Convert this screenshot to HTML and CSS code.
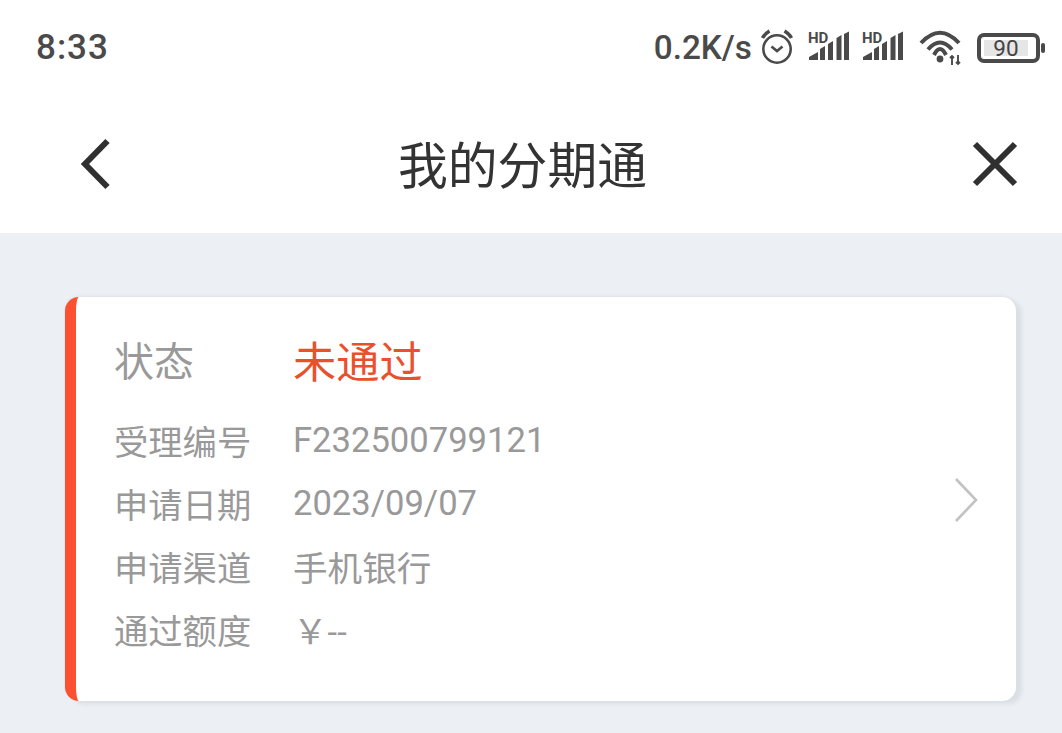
FILE: index.html
```html
<!DOCTYPE html>
<html lang="zh-CN">
<head>
<meta charset="utf-8">
<title>我的分期通</title>
<link rel="stylesheet" href="styles.css">
</head>
<body>
<div class="status">
  <span class="time">8:33</span>
  <div class="tray">
    <span class="speed">0.2K/s</span>
    <svg class="alarm" width="36" height="37" viewBox="0 0 36 37"><circle cx="17" cy="20" r="13.7" fill="none" stroke="#4a4a4a" stroke-width="2.6"/><path d="M11.5 17.5l5.5 4.5 5.5-4.5" fill="none" stroke="#4a4a4a" stroke-width="2.6"/><path d="M2.5 9C4 6 6 4 9.5 2M31.5 9C30 6 28 4 24.5 2" fill="none" stroke="#4a4a4a" stroke-width="3.4"/></svg>
    <svg class="signal" width="44" height="33" viewBox="0 0 44 33"><text x="2" y="11.5" class="hd">HD</text><path d="M3 29v-3l9-5v8zM14 29V18l5-3v14zM22 29V13l5-3v19zM30.5 29V7l5-3v25zM38 29V3l5-2.5V29z" fill="#4a4a4a"/></svg>
    <svg class="signal" width="44" height="33" viewBox="0 0 44 33"><text x="2" y="11.5" class="hd">HD</text><path d="M3 29v-3l9-5v8zM14 29V18l5-3v14zM22 29V13l5-3v19zM30.5 29V7l5-3v25zM38 29V3l5-2.5V29z" fill="#4a4a4a"/></svg>
    <svg class="wifi" width="44" height="37" viewBox="0 0 44 37"><path d="M2 14Q21-6.5 40 14M9 20.5Q21 6.5 33 20.5M15 26Q21 14 27 26" fill="none" stroke="#4a4a4a" stroke-width="4"/><circle cx="21" cy="30" r="3.4" fill="#4a4a4a"/><path d="M33 36v-9M31 29l2-2 2 2M39 26v9M37 33l2 2 2-2" fill="none" stroke="#4a4a4a" stroke-width="1.9"/></svg>
    <div class="battery"><span class="level">90</span></div>
    <span class="nub"></span>
  </div>
</div>
<header class="nav">
  <svg class="back" width="34" height="54" viewBox="0 0 34 54"><path d="M29.5 4L7 27l22.5 23" fill="none" stroke="#303030" stroke-width="6"/></svg>
  <h1 class="title">我的分期通</h1>
  <svg class="close" width="46" height="46" viewBox="0 0 46 46"><path d="M3 3l40 40M43 3L3 43" fill="none" stroke="#303030" stroke-width="6"/></svg>
</header>
<main class="content">
  <section class="card">
    <div class="rows">
      <div class="row head"><span class="label">状态</span><span class="state">未通过</span></div>
      <div class="row"><span class="label">受理编号</span><span class="value">F232500799121</span></div>
      <div class="row"><span class="label">申请日期</span><span class="value">2023/09/07</span></div>
      <div class="row"><span class="label">申请渠道</span><span class="value">手机银行</span></div>
      <div class="row"><span class="label">通过额度</span><span class="value">￥--</span></div>
    </div>
    <svg class="more" width="24" height="46" viewBox="0 0 24 46"><path d="M2 2l20 21L2 44" fill="none" stroke="#c2c2c2" stroke-width="2.6"/></svg>
  </section>
</main>
</body>
</html>
```
FILE: styles.css
```css
* { box-sizing: border-box; }
html, body { margin: 0; height: 100%; }
body {
  width: 1062px;
  height: 733px;
  overflow: hidden;
  background: #ecf0f5;
  font-family: Roboto, "Noto Sans CJK SC", sans-serif;
  display: flex;
  flex-direction: column;
}
svg { overflow: visible; flex: none; }
.status {
  height: 95px;
  background: #fff;
  display: flex;
  align-items: center;
  justify-content: space-between;
  padding: 0 17px 0 36px;
  color: #4a4a4a;
}
.time { font-size: 35px; font-weight: 500; letter-spacing: 1px; margin-bottom: 1px; }
.tray { display: flex; align-items: center; }
.speed { font-size: 33.3px; font-weight: 500; margin-right: 8px; }
.alarm { margin-right: 10px; }
.signal { margin-right: 10px; }
.signal + .signal { margin-right: 15px; }
.wifi { margin-right: 14px; }
.hd { font: 700 15px Roboto, sans-serif; fill: #4a4a4a; }
.battery {
  width: 63px;
  height: 30px;
  border: 4px solid #4a4a4a;
  border-radius: 7px;
  padding: 3px;
  display: flex;
}
.level {
  width: 44px;
  background: #e6e6e6;
  font-size: 22.5px;
  line-height: 16px;
  text-align: center;
  color: #444;
}
.nub { width: 4px; height: 10px; background: #4a4a4a; margin-left: 1px; border-radius: 2px; }
.nav {
  height: 138px;
  background: #fff;
  display: flex;
  align-items: center;
  padding: 0 44px 0 78px;
}
.title { margin: 0 auto 5px 286px; font-size: 49.8px; font-weight: 400; color: #333; }
.content { flex: 1; padding: 64px 46px 0 65px; }
.card {
  height: 404px;
  background: #fff;
  border-left: 11px solid #fc5130;
  border-radius: 14px;
  box-shadow: 0 -1px 3px #dce1e6, 6px 3px 4px #d9dfe4;
  display: flex;
  align-items: center;
  justify-content: space-between;
  padding: 0 38px;
}
.rows { display: flex; flex-direction: column; gap: 14px; margin-bottom: 10px; }
.row { display: flex; align-items: center; height: 49px; }
.label { width: 179px; font-size: 34.3px; color: #999; }
.value { font-size: 34.6px; color: #999; }
.head { margin-bottom: 18px; }
.head .label { font-size: 40px; }
.state { font-size: 43.2px; color: #e9502c; }
.more { margin-top: 2px; }
```
